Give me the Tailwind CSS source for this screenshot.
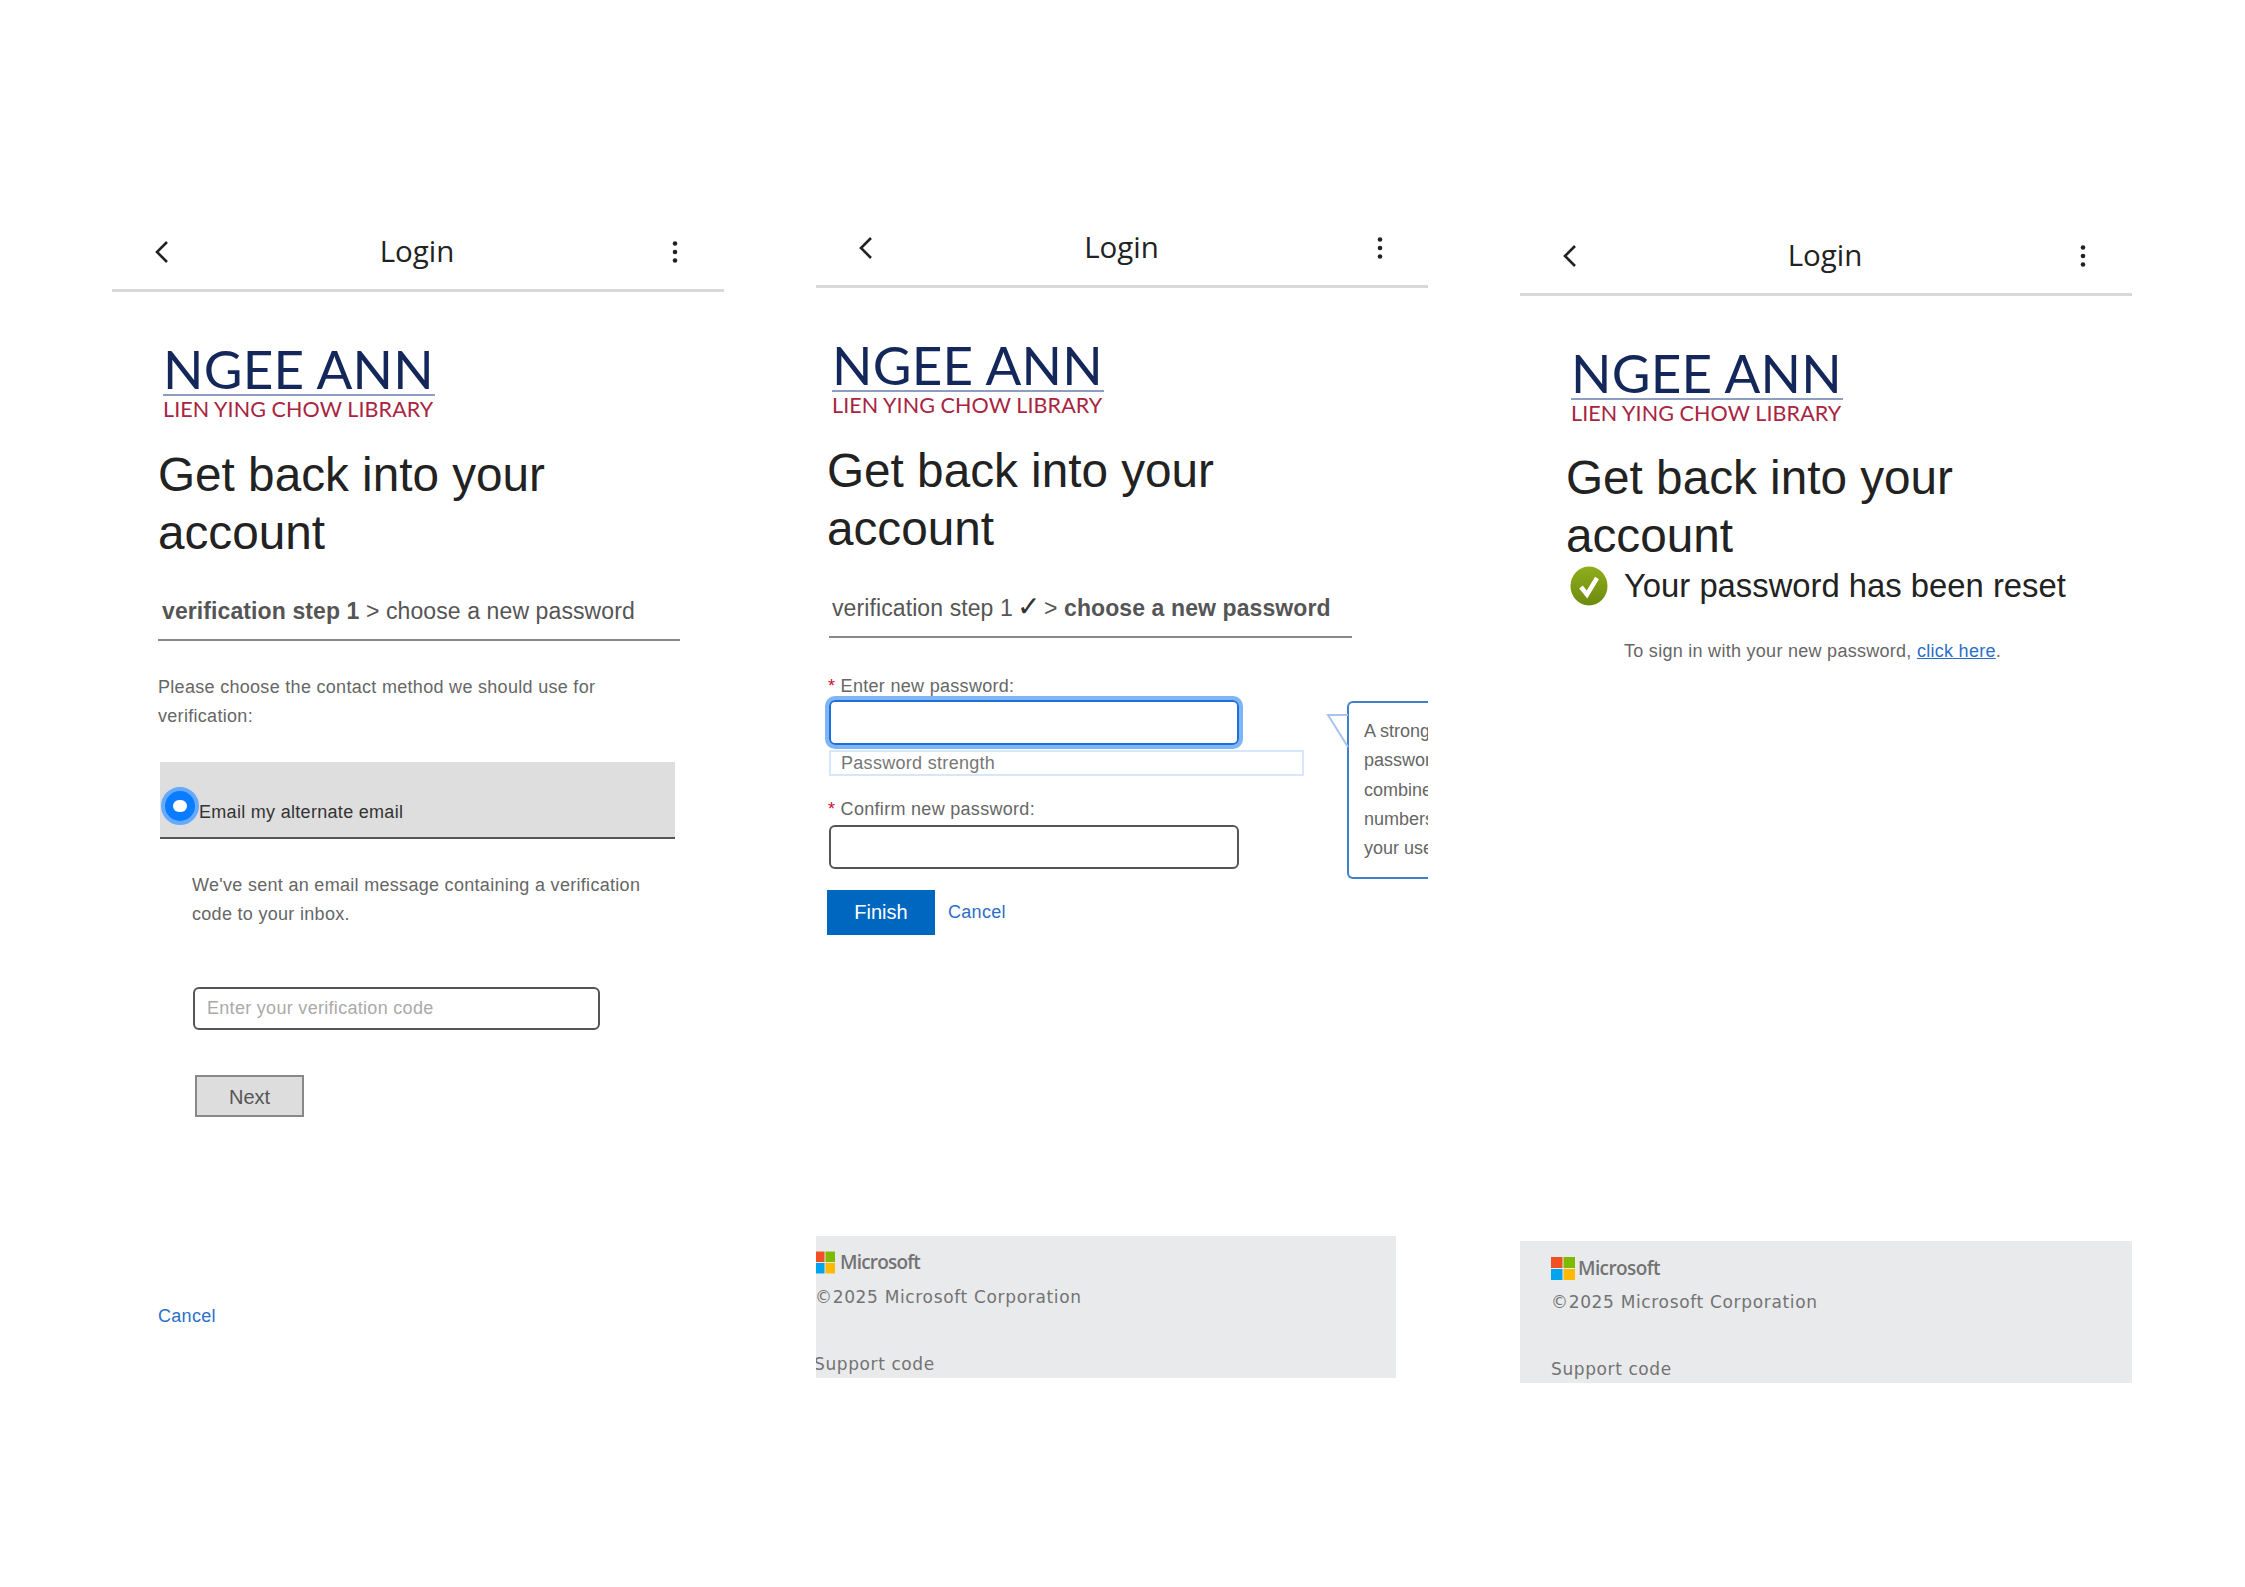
<!DOCTYPE html>
<html lang="en">
  <head>
    <meta charset="UTF-8" />
    <title>Login</title>
    <script src="https://cdn.jsdelivr.net/npm/@tailwindcss/browser@4"></script>
  </head>
  <body class="bg-white w-[2245px] h-[1587px] overflow-hidden font-['Liberation_Sans',sans-serif]">
    <div class="flex items-start pl-[112px] gap-[92px]">

      <!-- step 1 -->
      <section class="w-[612px] mt-[225px]">
        <header class="h-[67px] border-b-[3px] border-[#d9d9d9] flex items-center justify-between pl-[40px] pr-[46px] pb-[11px]">
          <svg class="w-[20px] h-[26px]" viewBox="0 0 20 26" fill="none" stroke="#222" stroke-width="2.6"><path d="M15 3 5 13l10 10"/></svg>
          <span class="mr-[10px] font-['Open_Sans',sans-serif] text-[29.5px] text-[#222]">Login</span>
          <svg class="w-[6px] h-[24px]" viewBox="0 0 6 24" fill="#222"><circle cx="3" cy="3.5" r="2.3"/><circle cx="3" cy="12" r="2.3"/><circle cx="3" cy="20.5" r="2.3"/></svg>
        </header>
        <div class="ml-[51px] mt-[52px] w-[272px] whitespace-nowrap">
          <div class="font-['Lato',sans-serif] text-[53px] leading-[50px] text-[#14275a] tracking-[0.25px]">NGEE ANN</div>
          <div class="h-[2px] bg-[#8e9cc0]"></div>
          <div class="font-['Lato',sans-serif] text-[21.5px] leading-[26px] text-[#a8243f] tracking-[0.1px]">LIEN YING CHOW LIBRARY</div>
        </div>
        <div class="pl-[46px] pr-[44px]">
          <h1 class="mt-[24px] text-[47.7px] leading-[57.5px] text-[#222] w-[500px]">Get back into your account</h1>
          <div class="mt-[34px] border-b-2 border-[#888] pb-[12px] pl-[4px] text-[23px] leading-[32px] text-[#555] tracking-[0.1px] whitespace-nowrap w-[522px]"><b>verification step 1</b> &gt; choose a new password</div>
          <p class="mt-[32px] text-[18px] leading-[29px] text-[#666] tracking-[0.3px] w-[510px]">Please choose the contact method we should use for verification:</p>
        </div>
        <div class="ml-[48px] mt-[31px] w-[515px] h-[77px] bg-[#dedede] border-b-2 border-[#555] relative pl-[39px] pt-[36px] text-[18px] leading-[28px] text-[#333] tracking-[0.3px]">
          Email my alternate email
          <span class="absolute left-[1px] top-[25px] w-[38px] h-[38px] rounded-full bg-[#0a7cff] border-[4px] border-[#66aaff] flex items-center justify-center"><span class="w-[14px] h-[12px] rounded-full bg-white"></span></span>
        </div>
        <p class="ml-[80px] mt-[32px] w-[480px] text-[18px] leading-[29px] text-[#666] tracking-[0.3px]">We've sent an email message containing a verification code to your inbox.</p>
        <div class="ml-[81px] mt-[58px] w-[407px] h-[43px] border-2 border-[#555] rounded-[6px] pl-[12px] text-[18px] leading-[38px] text-[#aaa] tracking-[0.3px]">Enter your verification code</div>
        <div class="ml-[83px] mt-[45px] w-[109px] h-[42px] bg-[#dddddd] border-2 border-[#888] text-center text-[20px] leading-[41px] text-[#555]">Next</div>
        <a class="block ml-[46px] mt-[186px] text-[18px] leading-[26px] text-[#2a6fc9] tracking-[0.3px]">Cancel</a>
      </section>

      <!-- step 2 -->
      <section class="w-[612px] mt-[221px] overflow-hidden">
        <header class="h-[67px] border-b-[3px] border-[#d9d9d9] flex items-center justify-between pl-[40px] pr-[45px] pb-[11px]">
          <svg class="w-[20px] h-[26px]" viewBox="0 0 20 26" fill="none" stroke="#222" stroke-width="2.6"><path d="M15 3 5 13l10 10"/></svg>
          <span class="mr-[10px] font-['Open_Sans',sans-serif] text-[29.5px] text-[#222]">Login</span>
          <svg class="w-[6px] h-[24px]" viewBox="0 0 6 24" fill="#222"><circle cx="3" cy="3.5" r="2.3"/><circle cx="3" cy="12" r="2.3"/><circle cx="3" cy="20.5" r="2.3"/></svg>
        </header>
        <div class="ml-[16px] mt-[52px] w-[272px] whitespace-nowrap">
          <div class="font-['Lato',sans-serif] text-[53px] leading-[50px] text-[#14275a] tracking-[0.25px]">NGEE ANN</div>
          <div class="h-[2px] bg-[#8e9cc0]"></div>
          <div class="font-['Lato',sans-serif] text-[21.5px] leading-[26px] text-[#a8243f] tracking-[0.1px]">LIEN YING CHOW LIBRARY</div>
        </div>
        <h1 class="ml-[11px] mt-[24px] text-[47.7px] leading-[57.5px] text-[#222] w-[500px]">Get back into your account</h1>
        <div class="ml-[13px] mt-[34px] w-[523px] border-b-2 border-[#888] pb-[12px] pl-[3px] text-[23px] leading-[32px] text-[#555] tracking-[0.1px] whitespace-nowrap">verification step 1 <span class="-ml-[2px] -mr-[3px] text-[28px] leading-[32px] text-[#333]">✓</span> &gt; <b>choose a new password</b></div>
        <div class="flex mt-[36px] ml-[11px]">
          <div class="w-[477px] shrink-0">
            <label class="block pl-[1px] text-[18px] leading-[24px] text-[#666] tracking-[0.3px]"><span class="text-[#c8102e]">*</span> Enter new password:</label>
            <div class="ml-[2px] mt-[2px] w-[410px] h-[45px] rounded-[6px] border-2 border-[#1f6fd8] ring-[4px] ring-[#7fb4f6]"></div>
            <div class="ml-[2px] mt-[5px] w-[475px] h-[26px] border-2 border-[#d8e7f7] pl-[10px] text-[18px] leading-[22px] text-[#777] tracking-[0.3px]">Password strength</div>
            <label class="block mt-[21px] pl-[1px] text-[18px] leading-[24px] text-[#666] tracking-[0.3px]"><span class="text-[#c8102e]">*</span> Confirm new password:</label>
            <div class="ml-[2px] mt-[4px] w-[410px] h-[44px] rounded-[6px] border-2 border-[#555]"></div>
            <div class="flex items-center mt-[21px]">
              <div class="w-[108px] h-[45px] bg-[#0067c0] text-white text-center text-[20px] leading-[45px]">Finish</div>
              <a class="ml-[13px] text-[18px] text-[#2a6fc9] tracking-[0.3px]">Cancel</a>
            </div>
          </div>
          <div class="relative ml-[43px] mt-[27px] w-[107px] h-[178px] shrink-0 border-2 border-r-0 border-[#3f7fd0] rounded-l-[6px] pl-[15px] pt-[14px] text-[18px] leading-[29.3px] text-[#666] whitespace-nowrap">
            A strong<br>password<br>combines<br>numbers<br>your user
            <svg class="absolute left-[-23px] top-[10px] w-[23px] h-[36px]" viewBox="0 0 23 36" fill="none" stroke="#a9c4ec" stroke-width="2"><path d="M22 2H2l20 32"/></svg>
          </div>
        </div>
        <footer class="mt-[301px] w-[580px] h-[142px] bg-[#e9eaec] overflow-hidden text-[#737373]">
          <div class="flex items-center pt-[13px]">
            <svg class="w-[20px] h-[23px] shrink-0 -ml-[1px]" viewBox="0 0 21 23"><rect width="10" height="11" fill="#f25022"/><rect x="11" width="10" height="11" fill="#7fba00"/><rect y="12" width="10" height="11" fill="#00a4ef"/><rect x="11" y="12" width="10" height="11" fill="#ffb900"/></svg>
            <span class="ml-[5px] font-['Open_Sans',sans-serif] font-semibold text-[19px] leading-[26px] tracking-[-0.8px]">Microsoft</span>
          </div>
          <p class="mt-[10px] -ml-[1px] font-['DejaVu_Sans',sans-serif] text-[17px] leading-[24px] tracking-[0.66px] whitespace-nowrap">©2025 Microsoft Corporation</p>
          <p class="mt-[43px] -ml-[2px] font-['DejaVu_Sans',sans-serif] text-[17px] leading-[24px] tracking-[0.6px] whitespace-nowrap">Support code</p>
        </footer>
      </section>

      <!-- step 3 -->
      <section class="w-[612px] mt-[229px]">
        <header class="h-[67px] border-b-[3px] border-[#d9d9d9] flex items-center justify-between pl-[40px] pr-[46px] pb-[11px]">
          <svg class="w-[20px] h-[26px]" viewBox="0 0 20 26" fill="none" stroke="#222" stroke-width="2.6"><path d="M15 3 5 13l10 10"/></svg>
          <span class="mr-[10px] font-['Open_Sans',sans-serif] text-[29.5px] text-[#222]">Login</span>
          <svg class="w-[6px] h-[24px]" viewBox="0 0 6 24" fill="#222"><circle cx="3" cy="3.5" r="2.3"/><circle cx="3" cy="12" r="2.3"/><circle cx="3" cy="20.5" r="2.3"/></svg>
        </header>
        <div class="ml-[51px] mt-[52px] w-[272px] whitespace-nowrap">
          <div class="font-['Lato',sans-serif] text-[53px] leading-[50px] text-[#14275a] tracking-[0.25px]">NGEE ANN</div>
          <div class="h-[2px] bg-[#8e9cc0]"></div>
          <div class="font-['Lato',sans-serif] text-[21.5px] leading-[26px] text-[#a8243f] tracking-[0.1px]">LIEN YING CHOW LIBRARY</div>
        </div>
        <h1 class="ml-[46px] mt-[23px] text-[47.7px] leading-[57.5px] text-[#222] w-[500px]">Get back into your account</h1>
        <div class="flex items-center ml-[50px] mt-[2px]">
          <svg class="w-[38px] h-[40px] shrink-0" viewBox="0 0 38 40"><defs><linearGradient id="ok" x1="0" y1="0" x2="0" y2="1"><stop offset="0" stop-color="#8fae1c"/><stop offset="1" stop-color="#6c8a0e"/></linearGradient></defs><ellipse cx="19" cy="20" rx="18.5" ry="19.5" fill="url(#ok)"/><path d="M11 21l6 7.5L27 12" fill="none" stroke="#fff" stroke-width="4.5"/></svg>
          <span class="ml-[16px] text-[32.8px] leading-[38px] text-[#222] whitespace-nowrap">Your password has been reset</span>
        </div>
        <p class="ml-[104px] mt-[32px] text-[18px] leading-[26px] text-[#666] tracking-[0.28px] whitespace-nowrap">To sign in with your new password, <a class="text-[#2a6fc9] underline">click here</a>.</p>
        <footer class="mt-[577px] h-[142px] bg-[#e9eaec] pl-[31px] text-[#737373]">
          <div class="flex items-center pt-[14px]">
            <svg class="w-[24px] h-[23px] shrink-0" viewBox="0 0 24 23"><rect width="11.5" height="11" fill="#f25022"/><rect x="12.5" width="11.5" height="11" fill="#7fba00"/><rect y="12" width="11.5" height="11" fill="#00a4ef"/><rect x="12.5" y="12" width="11.5" height="11" fill="#ffb900"/></svg>
            <span class="ml-[3px] font-['Open_Sans',sans-serif] font-semibold text-[19px] leading-[26px] tracking-[-0.6px]">Microsoft</span>
          </div>
          <p class="mt-[9px] font-['DejaVu_Sans',sans-serif] text-[17px] leading-[24px] tracking-[0.66px] whitespace-nowrap">©2025 Microsoft Corporation</p>
          <p class="mt-[43px] font-['DejaVu_Sans',sans-serif] text-[17px] leading-[24px] tracking-[0.6px] whitespace-nowrap">Support code</p>
        </footer>
      </section>
    </div>
  </body>
</html>
